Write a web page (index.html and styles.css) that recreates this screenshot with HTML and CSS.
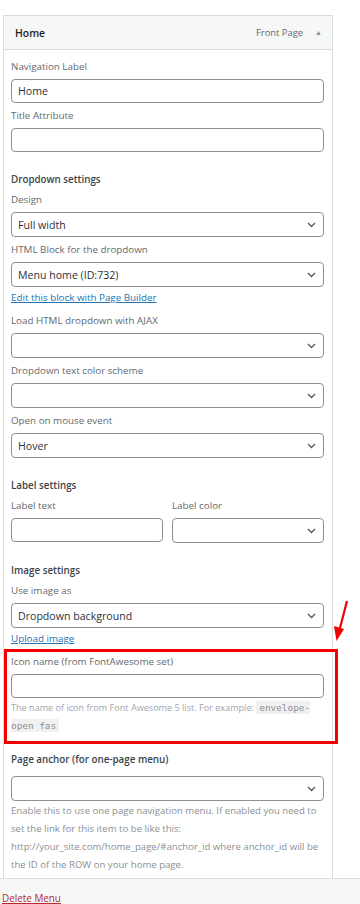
FILE: index.html
```html
<!DOCTYPE html>
<html>
<head>
    <title>Menu item - Home</title>
    <link rel="stylesheet" href="styles.css">
</head>
<body>
    <div class="wrap">
        <div class="menu-item">
            <div class="item-head">
                <span class="item-title">Home</span>
                <span class="item-type">Front Page</span>
                <span class="item-toggle">&#9650;</span>
            </div>

            <div class="item-body">
                <div class="field">
                    <label>Navigation Label</label>
                    <div class="control">Home</div>
                </div>
                <div class="field">
                    <label>Title Attribute</label>
                    <div class="control"></div>
                </div>

                <div class="section-title">Dropdown settings</div>
                <div class="field">
                    <label>Design</label>
                    <div class="control select">
                        <span>Full width</span>
                        <svg class="chevron" width="9" height="6" viewBox="0 0 9 6"><path d="M1 1l3.5 3.5L8 1" fill="none" stroke="#50575e" stroke-width="1.3"/></svg>
                    </div>
                </div>
                <div class="field">
                    <label>HTML Block for the dropdown</label>
                    <div class="control select">
                        <span>Menu home (ID:732)</span>
                        <svg class="chevron" width="9" height="6" viewBox="0 0 9 6"><path d="M1 1l3.5 3.5L8 1" fill="none" stroke="#50575e" stroke-width="1.3"/></svg>
                    </div>
                </div>
                <a class="field-link" href="#">Edit this block with Page Builder</a>
                <div class="field">
                    <label>Load HTML dropdown with AJAX</label>
                    <div class="control select">
                        <span></span>
                        <svg class="chevron" width="9" height="6" viewBox="0 0 9 6"><path d="M1 1l3.5 3.5L8 1" fill="none" stroke="#50575e" stroke-width="1.3"/></svg>
                    </div>
                </div>
                <div class="field">
                    <label>Dropdown text color scheme</label>
                    <div class="control select">
                        <span></span>
                        <svg class="chevron" width="9" height="6" viewBox="0 0 9 6"><path d="M1 1l3.5 3.5L8 1" fill="none" stroke="#50575e" stroke-width="1.3"/></svg>
                    </div>
                </div>
                <div class="field">
                    <label>Open on mouse event</label>
                    <div class="control select">
                        <span>Hover</span>
                        <svg class="chevron" width="9" height="6" viewBox="0 0 9 6"><path d="M1 1l3.5 3.5L8 1" fill="none" stroke="#50575e" stroke-width="1.3"/></svg>
                    </div>
                </div>

                <div class="section-title">Label settings</div>
                <div class="field-row">
                    <div class="field">
                        <label>Label text</label>
                        <div class="control"></div>
                    </div>
                    <div class="field">
                        <label>Label color</label>
                        <div class="control select">
                            <span></span>
                            <svg class="chevron" width="9" height="6" viewBox="0 0 9 6"><path d="M1 1l3.5 3.5L8 1" fill="none" stroke="#50575e" stroke-width="1.3"/></svg>
                        </div>
                    </div>
                </div>

                <div class="section-title">Image settings</div>
                <div class="field">
                    <label>Use image as</label>
                    <div class="control select">
                        <span>Dropdown background</span>
                        <svg class="chevron" width="9" height="6" viewBox="0 0 9 6"><path d="M1 1l3.5 3.5L8 1" fill="none" stroke="#50575e" stroke-width="1.3"/></svg>
                    </div>
                </div>
                <a class="field-link" href="#">Upload image</a>
                <div class="field">
                    <label>Icon name (from FontAwesome set)</label>
                    <div class="control"></div>
                    <p class="help small">The name of icon from Font Awesome 5 list. For example: <code>envelope-open fas</code></p>
                </div>

                <div class="section-title anchor-title">Page anchor (for one-page menu)</div>
                <div class="field last">
                    <div class="control select">
                        <span></span>
                        <svg class="chevron" width="9" height="6" viewBox="0 0 9 6"><path d="M1 1l3.5 3.5L8 1" fill="none" stroke="#50575e" stroke-width="1.3"/></svg>
                    </div>
                    <p class="help">Enable this to use one page navigation menu. If enabled you need to set the link for this item to be like this: http://your_site.com/home_page/#anchor_id where anchor_id will be the ID of the ROW on your home page.</p>
                </div>
            </div>
        </div>
    </div>

    <div class="footer">
        <a class="delete-link" href="#">Delete Menu</a>
    </div>

    <!-- annotation drawn over the screenshot -->
    <div class="highlight-box"></div>
    <svg class="highlight-arrow" width="20" height="46" viewBox="0 0 20 46">
        <line x1="15" y1="1" x2="8" y2="28" stroke="#f20000" stroke-width="2.2"/>
        <polygon points="2,26 12,29 4.5,41" fill="#f20000"/>
    </svg>
</body>
</html>
```

FILE: styles.css
```css
body {
    margin: 0;
    font-family: "Open Sans", "Noto Sans", sans-serif;
    font-size: 9.8px;
    color: #646970;
    background: #fff;
}
.wrap {
    padding: 15px 0 0 3px;
}
.menu-item {
    width: 330px;
}
.item-head {
    display: flex;
    align-items: center;
    height: 33px;
    padding: 0 10px 0 11px;
    border: 1px solid #dcdcde;
    background: #f6f7f7;
}
.item-title {
    flex: 1;
    font-size: 10.4px;
    font-weight: 600;
    color: #1d2327;
}
.item-type {
    font-size: 9.4px;
    color: #646970;
}
.item-toggle {
    margin-left: 12px;
    font-size: 7px;
    color: #8c8f94;
}
.item-body {
    padding: 9px 8px 4px 7px;
    border-left: 1px solid #dcdcde;
    border-right: 1px solid #dcdcde;
}
.field {
    margin-bottom: 5px;
}
.field label {
    display: block;
    line-height: 16px;
    margin-bottom: 4px;
}
.control {
    display: flex;
    align-items: center;
    justify-content: space-between;
    box-sizing: border-box;
    height: 24px;
    padding: 0 7px 0 6px;
    border: 1px solid #8c8f94;
    border-radius: 4px;
    background: #fff;
    font-size: 10.6px;
    color: #2c3338;
}
.control.select {
    height: 25px;
}
.chevron {
    flex: none;
}
.section-title {
    margin-top: 20px;
    margin-bottom: 4px;
    line-height: 16px;
    font-weight: 600;
    color: #3c434a;
}
.anchor-title {
    margin-top: 17px;
    margin-bottom: 8px;
}
.field-row {
    display: grid;
    grid-template-columns: 1fr 1fr;
    gap: 9px;
    margin-bottom: 5px;
}
.field-row .field {
    margin-bottom: 0;
}
.field-link {
    display: block;
    width: max-content;
    margin: -2px 0 7px;
    line-height: 16px;
    color: #2271b1;
}
.help {
    margin: 1px 0 0;
    font-size: 9.6px;
    line-height: 18px;
    color: #8c8f94;
}
.help.small {
    font-size: 9.1px;
    color: #a0a5aa;
}
.help code {
    padding: 1px 3px;
    background: #f0f0f1;
    font-family: "DejaVu Sans Mono", monospace;
    font-size: 9.4px;
    color: #8c8f94;
}
.field.last {
    margin-bottom: 0;
}
.footer {
    height: 26px;
    padding: 11px 0 0 2px;
    border-top: 1px solid #dcdcde;
    background: #f6f7f7;
}
.delete-link {
    font-size: 9.9px;
    line-height: 16px;
    color: #b32d2e;
}
.highlight-box {
    position: absolute;
    left: 4px;
    top: 649px;
    width: 328px;
    height: 89px;
    border: 3px solid #f20000;
}
.highlight-arrow {
    position: absolute;
    left: 332px;
    top: 600px;
}
```
